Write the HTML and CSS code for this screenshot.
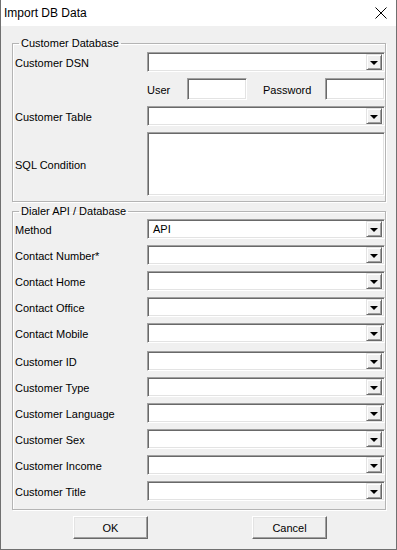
FILE: index.html
```html
<!DOCTYPE html>
<html lang="en">
<head>
  <meta charset="UTF-8">
  <title>Import DB Data</title>
  <link rel="stylesheet" href="styles.css">
</head>
<body>
  <div class="window">
    <div class="titlebar">
      <span class="title">Import DB Data</span>
      <svg class="close" width="12" height="12" viewBox="0 0 12 12">
        <path d="M0.5 0.5 L11.5 11.5 M11.5 0.5 L0.5 11.5" stroke="#000" stroke-width="1"/>
      </svg>
    </div>

    <div class="client">
      <!-- Customer Database -->
      <fieldset class="group group-customer">
        <legend>Customer Database</legend>
        <div class="row">
          <label>Customer DSN</label>
          <div class="combo"><span class="value"></span><span class="drop"></span></div>
        </div>
        <div class="row row-login">
          <span></span>
          <div class="login">
            <span class="login-label">User</span>
            <div class="textbox user-box"></div>
            <span class="login-label pass-label">Password</span>
            <div class="textbox pass-box"></div>
          </div>
        </div>
        <div class="row">
          <label>Customer Table</label>
          <div class="combo"><span class="value"></span><span class="drop"></span></div>
        </div>
        <div class="row row-sql">
          <label>SQL Condition</label>
          <div class="textbox sql-box"></div>
        </div>
      </fieldset>

      <!-- Dialer API / Database -->
      <fieldset class="group group-dialer">
        <legend>Dialer API / Database</legend>
        <div class="row">
          <label>Method</label>
          <div class="combo"><span class="value">API</span><span class="drop"></span></div>
        </div>
        <div class="row">
          <label>Contact Number*</label>
          <div class="combo"><span class="value"></span><span class="drop"></span></div>
        </div>
        <div class="row">
          <label>Contact Home</label>
          <div class="combo"><span class="value"></span><span class="drop"></span></div>
        </div>
        <div class="row">
          <label>Contact Office</label>
          <div class="combo"><span class="value"></span><span class="drop"></span></div>
        </div>
        <div class="row row-wide">
          <label>Contact Mobile</label>
          <div class="combo"><span class="value"></span><span class="drop"></span></div>
        </div>
        <div class="row">
          <label>Customer ID</label>
          <div class="combo"><span class="value"></span><span class="drop"></span></div>
        </div>
        <div class="row">
          <label>Customer Type</label>
          <div class="combo"><span class="value"></span><span class="drop"></span></div>
        </div>
        <div class="row">
          <label>Customer Language</label>
          <div class="combo"><span class="value"></span><span class="drop"></span></div>
        </div>
        <div class="row">
          <label>Customer Sex</label>
          <div class="combo"><span class="value"></span><span class="drop"></span></div>
        </div>
        <div class="row">
          <label>Customer Income</label>
          <div class="combo"><span class="value"></span><span class="drop"></span></div>
        </div>
        <div class="row">
          <label>Customer Title</label>
          <div class="combo"><span class="value"></span><span class="drop"></span></div>
        </div>
      </fieldset>

      <div class="buttons">
        <button class="btn">OK</button>
        <button class="btn">Cancel</button>
      </div>
    </div>
  </div>
</body>
</html>
```

FILE: styles.css
```css
body {
  margin: 0;
  font-family: 'Liberation Sans', Arial, sans-serif;
  font-size: 11px;
  color: #000;
  background: #fff;
}

.window {
  width: 397px;
  height: 550px;
  box-sizing: border-box;
  border: 1px solid #707070;
  border-top: none;
  display: flex;
  flex-direction: column;
  background: #f0f0f0;
}

.titlebar {
  height: 26px;
  background: #fff;
  display: flex;
  align-items: center;
  justify-content: space-between;
  padding: 0 9px 0 3px;
  flex-shrink: 0;
}

.title {
  font-size: 12px;
}

.close {
  display: block;
}

.client {
  flex: 1;
  padding: 0 10px 0 11px;
}

/* group boxes */
.group {
  margin: 0;
  padding: 0 0 0 2px;
  border: 1px solid #b4b4b4;
  box-shadow: inset 1px 1px #fff, 1px 1px #fff;
}

.group legend {
  padding: 0 2px;
  margin-left: 4px;
  line-height: 13px;
}

.group-customer {
  margin-top: 11px;
  padding-top: 2px;
  padding-bottom: 5px;
}

.group-dialer {
  margin-top: 3px;
  padding-top: 1px;
  padding-bottom: 8px;
}

.row {
  display: grid;
  grid-template-columns: 132px 238px;
  align-items: center;
  margin-bottom: 6px;
}

.row label {
  padding-top: 2px;
}

.row:last-child {
  margin-bottom: 0;
}

.row-wide {
  margin-bottom: 8px;
}

/* sunken 3d edge */
.combo,
.textbox {
  box-sizing: border-box;
  background: #fff;
  border: 1px solid;
  border-color: #a0a0a0 #fff #fff #a0a0a0;
  box-shadow: inset 1px 1px #696969, inset -1px -1px #e3e3e3;
}

.combo {
  height: 20px;
  display: flex;
  align-items: center;
  padding: 2px;
}

.combo .value {
  flex: 1;
  padding-left: 3px;
}

.drop {
  width: 16px;
  height: 16px;
  box-sizing: border-box;
  background: #f0f0f0;
  border: 1px solid;
  border-color: #e3e3e3 #696969 #696969 #e3e3e3;
  box-shadow: inset 1px 1px #fff, inset -1px -1px #a0a0a0;
  display: flex;
  align-items: center;
  justify-content: center;
}

.drop::after {
  content: '';
  border-left: 4px solid transparent;
  border-right: 4px solid transparent;
  border-top: 4px solid #000;
  margin-top: 1px;
}

.login {
  display: flex;
  align-items: center;
  height: 22px;
}

.login-label {
  width: 40px;
  padding-top: 2px;
}

.pass-label {
  width: 62px;
  margin-left: 16px;
}

.user-box,
.pass-box {
  width: 60px;
  height: 22px;
}

.sql-box {
  height: 64px;
}

.buttons {
  display: flex;
  padding: 6px 0 0 61px;
  gap: 104px;
}

.btn {
  width: 75px;
  height: 23px;
  box-sizing: border-box;
  font-family: 'Liberation Sans', Arial, sans-serif;
  font-size: 11px;
  color: #000;
  background: #f0f0f0;
  border: 1px solid;
  border-color: #fff #696969 #696969 #fff;
  box-shadow: inset -1px -1px #a0a0a0, inset 1px 1px #e3e3e3;
  padding: 0;
}
```
